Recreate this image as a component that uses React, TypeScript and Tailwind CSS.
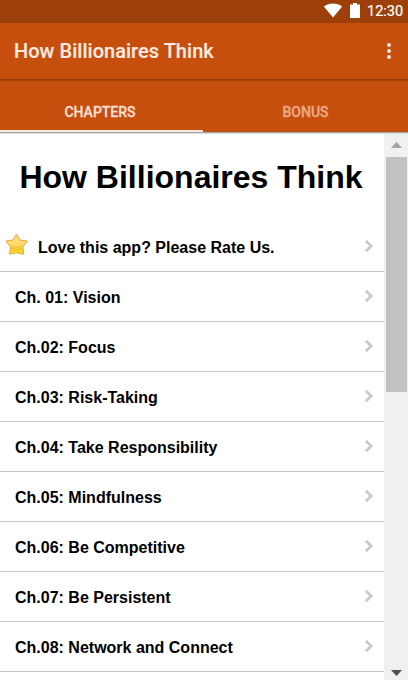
import React from "react";

const chapters = [
  "Ch. 01: Vision",
  "Ch.02: Focus",
  "Ch.03: Risk-Taking",
  "Ch.04: Take Responsibility",
  "Ch.05: Mindfulness",
  "Ch.06: Be Competitive",
  "Ch.07: Be Persistent",
  "Ch.08: Network and Connect",
];

function Chevron() {
  return (
    <svg className="mr-[10px] mb-[1px] shrink-0" width="10" height="14" viewBox="0 0 10 14" fill="none">
      <path d="M1.8 1.7 7.2 7 1.8 12.3" stroke="#c9c9c9" strokeWidth="2.7" />
    </svg>
  );
}

function Star() {
  return (
    <svg className="mr-[9px] mb-[4px] ml-[5px] shrink-0" width="24" height="24" viewBox="0 0 24 24">
      <defs>
        <linearGradient id="gold" x1="0" y1="0" x2="0" y2="1">
          <stop offset="0" stopColor="#fbd98a" />
          <stop offset="0.5" stopColor="#fcdc6c" />
          <stop offset="0.72" stopColor="#f5c52c" />
          <stop offset="1" stopColor="#ffe822" />
        </linearGradient>
      </defs>
      <path
        d="M11.6 1 15 7 22.4 8 17.8 14 18.8 21.2 11.6 19.8 4.6 21.2 5.5 14 .8 8 8.1 7Z"
        fill="url(#gold)"
        stroke="#dfaa48"
        strokeWidth="1"
        strokeLinejoin="round"
      />
    </svg>
  );
}

function Row({ text, star = false }: { text: string; star?: boolean }) {
  return (
    <li className="flex h-[50px] shrink-0 items-center border-b border-[#c8c8c8]">
      {star && <Star />}
      <span className={`flex-1 whitespace-nowrap pt-[2px] text-[16px] font-bold leading-5 text-black ${star ? "" : "pl-[15px]"}`}>
        {text}
      </span>
      <Chevron />
    </li>
  );
}

export default function App() {
  return (
    <div className="flex h-[680px] w-[408px] flex-col overflow-hidden bg-white font-['Liberation_Sans',Arial,sans-serif]">
      <div className="flex h-[23px] shrink-0 items-center bg-[#9d3f0a] pl-[323px] font-[Roboto,sans-serif] text-white">
        <svg className="mr-[7px] mb-[2px] shrink-0" width="20" height="16" viewBox="0 0 20 16">
          <path d="M.8 3.5C6-.5 14-.5 19.2 3.5L10 14.4Z" fill="white" />
        </svg>
        <svg className="mr-[7px] mb-[2px] shrink-0" width="10" height="15" viewBox="0 0 10 15">
          <path d="M0 1.5H3V0H7V1.5H10V15H0Z" fill="white" />
        </svg>
        <span className="text-[14.5px] leading-5 [-webkit-text-stroke:0.2px]">12:30</span>
      </div>
      <header className="flex h-[56px] shrink-0 items-center justify-between bg-[#c64f0d] pr-[17px] pl-[14px]">
        <span className="font-[Roboto,sans-serif] text-[20px] font-medium leading-6 tracking-[0.03px] text-[#fdeae0] [-webkit-text-stroke:0.15px]">
          How Billionaires Think
        </span>
        <svg width="4" height="16" viewBox="0 0 4 16" fill="#fbe5da">
          <circle cx="2" cy="2" r="2" />
          <circle cx="2" cy="8" r="2" />
          <circle cx="2" cy="14" r="2" />
        </svg>
      </header>
      <nav className="flex h-[53px] shrink-0 border-t border-[#943b0a] bg-[#c64f0d] pt-px font-[Roboto,sans-serif] text-[14px] font-medium leading-4 shadow-[inset_0_1px_0_#a94209] [-webkit-text-stroke:0.3px]">
        <div className="w-[203px] border-b-2 border-[#fbe9e0] pt-[23px] pr-[3px] text-center text-[#fbdfd0]">CHAPTERS</div>
        <div className="flex-1 pt-[23px] text-center text-[#eba987]">BONUS</div>
      </nav>
      <div className="h-[2px] shrink-0 border-t border-[#aaa9a7] bg-[#dcdcdc]" />
      <main className="flex min-h-0 flex-1">
        <section className="w-[384px] overflow-hidden">
          <h1 className="h-[88px] pt-[23px] pr-[2px] text-center text-[32px] font-bold leading-10 whitespace-nowrap text-black">
            How Billionaires Think
          </h1>
          <ul className="flex flex-col">
            <Row star text="Love this app? Please Rate Us." />
            {chapters.map((chapter) => (
              <Row key={chapter} text={chapter} />
            ))}
          </ul>
        </section>
        <aside className="flex w-6 flex-col items-center bg-[#f0f0f0]">
          <svg className="mt-[8px] ml-px shrink-0" width="11" height="6" viewBox="0 0 11 6">
            <path d="M0 6 5.5 0 11 6Z" fill="#a3a3a3" />
          </svg>
          <div className="mt-[9px] ml-px h-[235px] w-[21px] shrink-0 bg-[#c1c1c1]" />
          <svg className="mt-auto mb-1 ml-px shrink-0" width="11" height="6" viewBox="0 0 11 6">
            <path d="M0 0H11L5.5 6Z" fill="#505050" />
          </svg>
        </aside>
      </main>
    </div>
  );
}
